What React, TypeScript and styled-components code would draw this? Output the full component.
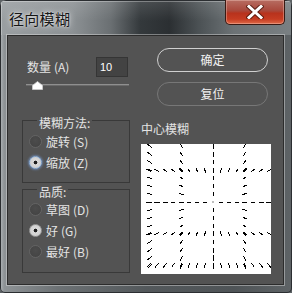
import React from 'react';
import styled, { createGlobalStyle } from 'styled-components';

const Global = createGlobalStyle`
  html, body { margin: 0; padding: 0; background: #5d6265; }
  body { font-family: "Noto Sans CJK SC", "Noto Sans", sans-serif; }
  * { box-sizing: border-box; }
`;

const Window = styled.div`
  width: 292px;
  height: 293px;
  display: flex;
  flex-direction: column;
  border-radius: 6px 6px 5px 5px;
  overflow: hidden;
  background: linear-gradient(90deg, #b3b8bb 0px, #8e9396 4px, #6c7174 20%, #53585b 50%, #4f5457 80%, #5e6366 100%);
  box-shadow: inset 0 0 0 1px #2b2e31;
`;

const TitleBar = styled.div`
  height: 35px;
  flex: none;
  display: flex;
  align-items: flex-start;
  padding: 0 7px 0 9px;
  background:
    linear-gradient(180deg, rgba(255,255,255,0.12), rgba(255,255,255,0) 60%),
    linear-gradient(90deg, #9a9fa2 0%, #8c9194 25%, #6a6f72 38%, #34393c 48%, #2b2f32 58%, #4b5154 68%, #6c7275 80%, #7a8083 100%);
  box-shadow: inset 1px 1px 0 #2b2e31, inset -1px 0 0 #2b2e31, inset 2px 2px 0 rgba(255,255,255,0.3);
`;

const Title = styled.div`
  margin-top: 9px;
  font-size: 15px;
  line-height: 20px;
  color: #161616;
  letter-spacing: 0.3px;
  text-shadow: 0 0 6px rgba(255,255,255,0.85), 0 0 2px rgba(255,255,255,0.7);
`;

const CloseButton = styled.div`
  margin-left: auto;
  width: 60px;
  height: 25px;
  border: 1px solid #3a1913;
  border-top: none;
  border-radius: 0 0 5px 5px;
  display: flex;
  align-items: center;
  justify-content: center;
  background: linear-gradient(180deg, #b76d62 0%, #a9483b 45%, #b8321d 55%, #c53c22 80%, #df6a48 100%);
  box-shadow: inset 0 0 0 1px rgba(255,220,210,0.35);
`;

const Client = styled.div`
  flex: 1;
  margin: 0 8px 8px 7px;
  background: #535353;
  border: 1px solid #2c2c2c;
  box-shadow: 0 0 0 1px rgba(225,225,225,0.45);
  display: flex;
  padding-left: 14px;
  color: #e4e4e4;
  font-size: 12px;
`;

const LeftColumn = styled.div`
  width: 108px;
  flex: none;
  padding-top: 21px;
  display: flex;
  flex-direction: column;
`;

const RightColumn = styled.div`
  width: 130px;
  flex: none;
  margin-left: 11px;
  padding-top: 12px;
  display: flex;
  flex-direction: column;
`;

const AmountRow = styled.div`
  height: 20px;
  display: flex;
  align-items: center;
  padding-left: 5px;
  padding-right: 2px;
`;

const Label = styled.span`
  font-size: 12px;
  line-height: 14px;
  color: #e4e4e4;
  white-space: nowrap;
`;

const Key = styled.span`
  margin-left: 3px;
`;

const NumberInput = styled.input`
  margin-left: auto;
  width: 32px;
  height: 20px;
  padding: 0 0 0 3px;
  border: 1px solid #353535;
  background: #434343;
  color: #ffffff;
  font-family: "Liberation Sans", Arial, sans-serif;
  font-size: 11px;
  outline: none;
`;

const Slider = styled.div`
  position: relative;
  margin-top: 4px;
  margin-left: 4px;
  width: 103px;
  height: 9px;
`;

const Track = styled.div`
  position: absolute;
  left: 0;
  right: 0;
  top: 3px;
  height: 2px;
  background: #8f8f8f;
  border-bottom: 1px solid #6a6a6a;
`;

const Thumb = styled.svg`
  position: absolute;
  top: 0;
`;

const Group = styled.div<{ $top: number; $height: number; $padTop: number }>`
  position: relative;
  margin-top: ${p => p.$top}px;
  height: ${p => p.$height}px;
  border: 1px solid #393939;
  padding: ${p => p.$padTop}px 0 0 6px;
  display: flex;
  flex-direction: column;
`;

const Legend = styled.span`
  position: absolute;
  top: -5px;
  left: 14px;
  padding: 0 2px;
  background: #535353;
  font-size: 12px;
  line-height: 14px;
  color: #e4e4e4;
`;

const RadioRow = styled.div`
  height: 21px;
  display: flex;
  align-items: center;
  gap: 4px;
`;

const RadioDot = styled.span<{ $checked?: boolean; $focus?: boolean }>`
  width: 13px;
  height: 13px;
  flex: none;
  border-radius: 50%;
  border: 1px solid ${p => (p.$focus ? '#8fb3de' : p.$checked ? '#9a9a9a' : '#646464')};
  background: ${p =>
    p.$checked
      ? 'radial-gradient(circle, #1e1e1e 0 1.6px, #dadada 2.2px, #c6c6c6 100%)'
      : 'radial-gradient(circle at 50% 40%, #4c4c4c, #424242)'};
  box-shadow: ${p => (p.$focus ? '0 0 2px 1px rgba(120,160,220,0.55)' : 'none')};
`;

const DialogButton = styled.button<{ $primary?: boolean }>`
  margin-left: 16px;
  width: 111px;
  height: 24px;
  flex: none;
  border-radius: 12px;
  border: ${p => (p.$primary ? '1.5px solid #d0d0d0' : '1px solid #777777')};
  background: transparent;
  color: #f2f2f2;
  font-family: "Noto Sans CJK SC", sans-serif;
  font-size: 12px;
  line-height: 14px;
  padding: 0;
  & + & {
    margin-top: 10px;
  }
`;

const CenterLabel = styled.div`
  margin-top: 16px;
  font-size: 12px;
  line-height: 14px;
  color: #e4e4e4;
`;

const Preview = styled.svg`
  margin-top: 8px;
  display: block;
  background: #ffffff;
`;

const CX = 72;
const CY = 58;
const STEP = 31.6;
const SIZE = 130;

function buildDashes(): string {
  const cols = [CX - 2 * STEP, CX - STEP, CX, CX + STEP];
  const rows = [CY - STEP, CY, CY + STEP, CY + 2 * STEP];
  const parts: string[] = [];
  const add = (x: number, y: number) => {
    const dx = x - CX;
    const dy = y - CY;
    const d = Math.hypot(dx, dy);
    if (d < 1) return;
    const len = 4 + d * 0.02;
    const ux = (dx / d) * (len / 2);
    const uy = (dy / d) * (len / 2);
    parts.push(`M${(x - ux).toFixed(1)} ${(y - uy).toFixed(1)}L${(x + ux).toFixed(1)} ${(y + uy).toFixed(1)}`);
  };
  for (const y of rows) {
    for (let k = -12; k <= 12; k++) {
      const x = CX + k * 8;
      if (x > 0 && x < SIZE) add(x, y);
    }
  }
  for (const x of cols) {
    for (let k = -12; k <= 12; k++) {
      const y = CY + k * 8;
      if (y > 0 && y < SIZE) add(x, y);
    }
  }
  return parts.join('');
}

const dashes = buildDashes();

const amount = 10;
const thumbLeft = Math.round(((amount - 1) / 99) * 103 - 3);

export default function App() {
  return (
    <>
      <Global />
      <Window>
        <TitleBar>
          <Title>径向模糊</Title>
          <CloseButton>
            <svg width="18" height="14" viewBox="0 0 18 14">
              <path d="M3 1.5L15 12.5M15 1.5L3 12.5" stroke="rgba(70,20,10,0.75)" strokeWidth="5" strokeLinecap="square" />
              <path d="M3 1.5L15 12.5M15 1.5L3 12.5" stroke="#ffffff" strokeWidth="3" strokeLinecap="square" />
            </svg>
          </CloseButton>
        </TitleBar>
        <Client>
          <LeftColumn>
            <AmountRow>
              <Label>数量<Key>(A)</Key></Label>
              <NumberInput value="10" readOnly />
            </AmountRow>
            <Slider>
              <Track />
              <Thumb width="11" height="9" viewBox="0 0 11 9" style={{ left: thumbLeft }}>
                <path d="M5.5 0.5L10.5 4.5V8.5H0.5V4.5Z" fill="#ffffff" stroke="#cfcfcf" strokeWidth="0.8" />
              </Thumb>
            </Slider>
            <Group $top={30} $height={63} $padTop={10}>
              <Legend>模糊方法:</Legend>
              <RadioRow>
                <RadioDot />
                <Label>旋转<Key>(S)</Key></Label>
              </RadioRow>
              <RadioRow>
                <RadioDot $checked $focus />
                <Label>缩放<Key>(Z)</Key></Label>
              </RadioRow>
            </Group>
            <Group $top={6} $height={84} $padTop={9}>
              <Legend>品质:</Legend>
              <RadioRow>
                <RadioDot />
                <Label>草图<Key>(D)</Key></Label>
              </RadioRow>
              <RadioRow>
                <RadioDot $checked />
                <Label>好<Key>(G)</Key></Label>
              </RadioRow>
              <RadioRow>
                <RadioDot />
                <Label>最好<Key>(B)</Key></Label>
              </RadioRow>
            </Group>
          </LeftColumn>
          <RightColumn>
            <DialogButton $primary>确定</DialogButton>
            <DialogButton>复位</DialogButton>
            <CenterLabel>中心模糊</CenterLabel>
            <Preview width={SIZE} height={SIZE} viewBox={`0 0 ${SIZE} ${SIZE}`}>
              <path d={dashes} stroke="#000000" strokeWidth="1" fill="none" shapeRendering="crispEdges" />
              <rect x={CX - 0.5} y={CY - 0.5} width="1" height="1" fill="#000" />
            </Preview>
          </RightColumn>
        </Client>
      </Window>
    </>
  );
}
